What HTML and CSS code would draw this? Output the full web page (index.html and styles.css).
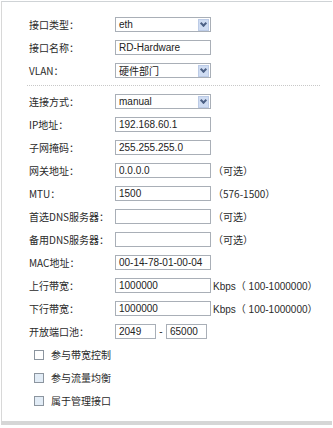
FILE: index.html
```html
<!DOCTYPE html>
<html lang="zh">
<head>
    <meta charset="UTF-8">
    <title>接口设置</title>
    <link rel="stylesheet" href="styles.css">
</head>
<body>

<div class="panel">
    <div class="row">
        <label class="lbl">接口类型：</label>
        <div class="select"><span>eth</span><i class="arrow"></i></div>
    </div>
    <div class="row">
        <label class="lbl">接口名称：</label>
        <div class="field">RD-Hardware</div>
    </div>
    <div class="row">
        <label class="lbl">VLAN：</label>
        <div class="select"><span class="cjk">硬件部门</span><i class="arrow"></i></div>
    </div>

    <div class="sep"></div>

    <div class="row">
        <label class="lbl">连接方式：</label>
        <div class="select"><span>manual</span><i class="arrow"></i></div>
    </div>
    <div class="row">
        <label class="lbl">IP地址：</label>
        <div class="field">192.168.60.1</div>
    </div>
    <div class="row">
        <label class="lbl">子网掩码：</label>
        <div class="field">255.255.255.0</div>
    </div>
    <div class="row">
        <label class="lbl">网关地址：</label>
        <div class="field">0.0.0.0</div>
        <span class="hint">（可选）</span>
    </div>
    <div class="row">
        <label class="lbl">MTU：</label>
        <div class="field">1500</div>
        <span class="hint">（576-1500）</span>
    </div>
    <div class="row">
        <label class="lbl">首选DNS服务器：</label>
        <div class="field"></div>
        <span class="hint">（可选）</span>
    </div>
    <div class="row">
        <label class="lbl">备用DNS服务器：</label>
        <div class="field"></div>
        <span class="hint">（可选）</span>
    </div>
    <div class="row">
        <label class="lbl">MAC地址：</label>
        <div class="field">00-14-78-01-00-04</div>
    </div>
    <div class="row">
        <label class="lbl">上行带宽：</label>
        <div class="field">1000000</div>
        <span class="unit">Kbps（ 100-1000000）</span>
    </div>
    <div class="row">
        <label class="lbl">下行带宽：</label>
        <div class="field">1000000</div>
        <span class="unit">Kbps（ 100-1000000）</span>
    </div>
    <div class="row">
        <label class="lbl">开放端口池：</label>
        <div class="field short">2049</div>
        <span class="dash">-</span>
        <div class="field short">65000</div>
    </div>

    <div class="check"><span class="box"></span>参与带宽控制</div>
    <div class="check"><span class="box blue"></span>参与流量均衡</div>
    <div class="check"><span class="box blue"></span>属于管理接口</div>
</div>

</body>
</html>
```

FILE: styles.css
```css
body {
    margin: 0;
    background: #fff;
    font-family: "Liberation Sans", "Noto Sans CJK SC", sans-serif;
    font-size: 10px;
    color: #2a2a2a;
}
.panel {
    width: 330px;
    height: 408px;
    margin-top: 1px;
    margin-left: 1px;
    border-left: 1px solid #d8d8d8;
    border-top: 1px solid #cfd3d6;
    border-bottom: 4px solid #d6d6d6;
    padding-top: 11px;
    box-sizing: content-box;
    white-space: nowrap;
}
.row {
    display: flex;
    align-items: center;
    height: 23px;
}
.lbl {
    width: 113px;
    padding-left: 27px;
    font-family: "Noto Sans CJK SC", sans-serif;
    font-size: 10px;
    color: #2a2a2a;
    flex-shrink: 0;
    box-sizing: border-box;
}
.field, .select {
    width: 96px;
    height: 15px;
    border: 1px solid #a9afb7;
    padding-left: 3px;
    line-height: 13px;
    color: #222;
    flex-shrink: 0;
    box-sizing: border-box;
    overflow: hidden;
}
.select {
    display: flex;
    justify-content: space-between;
    align-items: center;
    padding-right: 1px;
}
.cjk {
    font-family: "Noto Sans CJK SC", sans-serif;
}
.arrow {
    width: 11px;
    height: 12px;
    background: #cfdcf2;
    border: 1px solid #bccbe6;
    box-sizing: border-box;
    position: relative;
}
.arrow::after {
    content: "";
    position: absolute;
    left: 2px;
    top: 1px;
    width: 3px;
    height: 3px;
    border-right: 2px solid #4d6185;
    border-bottom: 2px solid #4d6185;
    transform: rotate(45deg);
}
.field.short {
    width: 41px;
}
.dash {
    width: 10px;
    text-align: center;
}
.hint {
    margin-left: 2px;
    font-family: "Noto Sans CJK SC", sans-serif;
    font-size: 10px;
}
.unit {
    margin-left: 2px;
}
.sep {
    margin: 3px 12px 4px 25px;
    border-top: 1px dotted #c8c8c8;
}
.check {
    display: flex;
    align-items: center;
    height: 23px;
    padding-left: 32px;
    font-family: "Noto Sans CJK SC", sans-serif;
    font-size: 10px;
}
.box {
    width: 8px;
    height: 8px;
    border: 1px solid #8c959f;
    background: #fff;
    margin-right: 7px;
}
.box.blue {
    background: #e2ecf6;
}
```
